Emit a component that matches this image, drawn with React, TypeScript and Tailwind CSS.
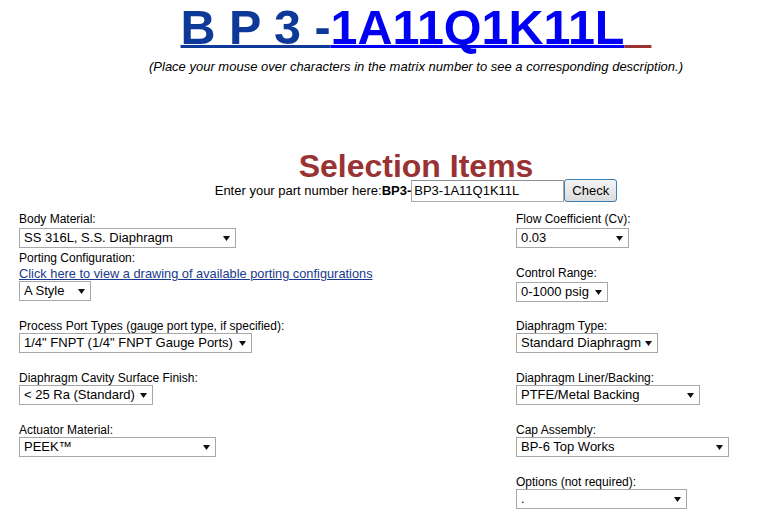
import React from "react";

interface FieldProps {
  label: string;
  value: string;
  width: string;
  className?: string;
}

const Arrow = () => (
  <svg
    width="7"
    height="5"
    viewBox="0 0 7 5"
    className="pointer-events-none absolute right-[6px] top-[8px]"
  >
    <path d="M0 0 H7 L3.5 5 Z" fill="#111" />
  </svg>
);

const Select: React.FC<{ value: string; width: string; className?: string }> = ({
  value,
  width,
  className,
}) => (
  <div className={`relative h-[20px] ${width} ${className ?? ""}`}>
    <select
      defaultValue={value}
      className="block h-[20px] w-full appearance-none border border-[#a7a7a7] bg-white pl-[4px] text-[13px] leading-[18px] text-black outline-none"
    >
      <option value={value}>{value}</option>
    </select>
    <Arrow />
  </div>
);

const Field: React.FC<FieldProps> = ({ label, value, width, className }) => (
  <div className={className}>
    <div className="text-[12px] leading-[14px]">{label}</div>
    <Select value={value} width={width} />
  </div>
);

export default function App() {
  return (
    <div className="min-h-screen w-full overflow-hidden bg-white text-black [font-family:'Liberation_Sans',Arial,sans-serif]">
      <div className="w-[832px]">
        {/* matrix number */}
        <div className="text-center text-[48.5px] font-bold leading-[55px]">
          <span className="text-[#0d3a99] underline decoration-[3px] underline-offset-[1px] [text-decoration-skip-ink:none]">
            B P 3 -
          </span>
          <span className="text-[#0000f5] underline decoration-[3px] underline-offset-[1px] [text-decoration-skip-ink:none]">
            1A11Q1K11L
          </span>
          <span className="text-[#993333] underline decoration-[3px] underline-offset-[1px] [text-decoration-skip-ink:none]">
            {"\u00a0\u00a0"}
          </span>
        </div>
        <div className="mt-[5px] text-center text-[13px] italic leading-[14px]">
          (Place your mouse over characters in the matrix number to see a corresponding description.)
        </div>

        <div className="mt-[79px] text-center text-[32px] font-bold leading-[26px] text-[#993333]">
          Selection Items
        </div>
        <div className="flex h-[23px] items-center justify-center text-[13px]">
          <span>Enter your part number here:</span>
          <span className="font-bold">BP3-</span>
          <input
            defaultValue="BP3-1A11Q1K11L"
            className="h-[22px] w-[153px] border border-[#a9a9a9] border-t-[#8e8e8e] px-[2px] text-[13px] outline-none"
          />
          <button className="h-[23px] w-[53px] rounded-[3px] border border-[#3c7fb1] bg-gradient-to-b from-[#f4f4f4] to-[#dcdcdc] text-[13px]">
            Check
          </button>
        </div>

        {/* form */}
        <div className="mt-[10px] grid grid-cols-[497px_1fr] pl-[19px]">
          <div>
            <div className="text-[12px] leading-[14px]">Body Material:</div>
            <Select value="SS 316L, S.S. Diaphragm" width="w-[217px]" className="mt-[2px]" />
            <div className="mt-[3px] text-[12px] leading-[14px]">Porting Configuration:</div>
            <a href="#" className="mt-[2px] block w-fit text-[12.8px] leading-[14px] text-[#1a3a8c] underline">
              Click here to view a drawing of available porting configurations
            </a>
            <Select value="A Style" width="w-[72px]" />
            <Field
              className="mt-[18px]"
              label="Process Port Types (gauge port type, if specified):"
              value={'1/4" FNPT (1/4" FNPT Gauge Ports)'}
              width="w-[233px]"
            />
            <Field
              className="mt-[18px]"
              label="Diaphragm Cavity Surface Finish:"
              value="< 25 Ra (Standard)"
              width="w-[134px]"
            />
            <Field
              className="mt-[18px]"
              label="Actuator Material:"
              value="PEEK™"
              width="w-[197px]"
            />
          </div>
          <div>
            <div className="text-[12px] leading-[14px]">Flow Coefficient (Cv):</div>
            <Select value="0.03" width="w-[113px]" className="mt-[2px]" />
            <div className="mt-[18px] text-[12px] leading-[14px]">Control Range:</div>
            <Select value="0-1000 psig" width="w-[92px]" className="mt-[2px]" />
            <Field
              className="mt-[17px]"
              label="Diaphragm Type:"
              value="Standard Diaphragm"
              width="w-[142px]"
            />
            <Field
              className="mt-[18px]"
              label="Diaphragm Liner/Backing:"
              value="PTFE/Metal Backing"
              width="w-[184px]"
            />
            <Field
              className="mt-[18px]"
              label="Cap Assembly:"
              value="BP-6 Top Works"
              width="w-[213px]"
            />
            <Field
              className="mt-[18px]"
              label="Options (not required):"
              value="."
              width="w-[171px]"
            />
          </div>
        </div>
      </div>
    </div>
  );
}
